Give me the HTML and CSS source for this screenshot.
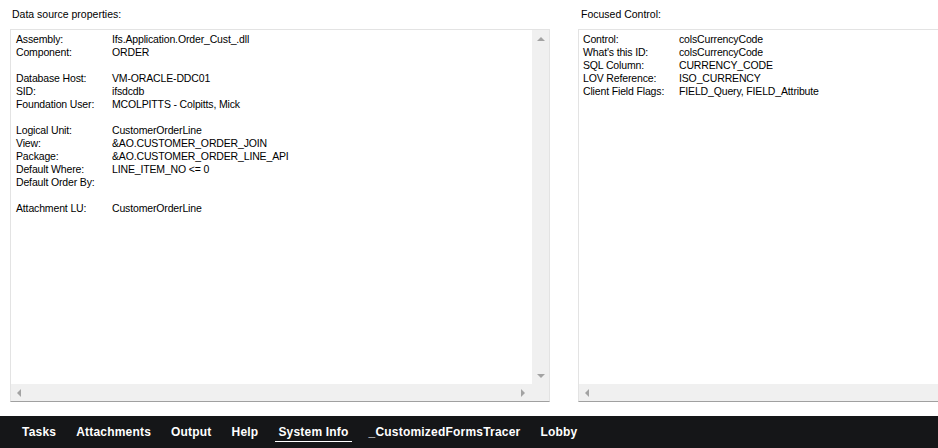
FILE: index.html
```html
<!DOCTYPE html>
<html>
<head>
<meta charset="utf-8">
<link rel="stylesheet" href="styles.css">
</head>
<body>
<div class="page">
  <main class="panels">
    <section class="panel panel-left">
      <div class="panel-title">Data source properties:</div>
      <div class="box">
        <div class="box-main">
          <div class="content">
            <div class="grid">
              <span>Assembly:</span><span>Ifs.Application.Order_Cust_.dll</span>
              <span>Component:</span><span>ORDER</span>
              <span class="blank"></span><span class="blank"></span>
              <span>Database Host:</span><span>VM-ORACLE-DDC01</span>
              <span>SID:</span><span>ifsdcdb</span>
              <span>Foundation User:</span><span>MCOLPITTS - Colpitts, Mick</span>
              <span class="blank"></span><span class="blank"></span>
              <span>Logical Unit:</span><span>CustomerOrderLine</span>
              <span>View:</span><span>&amp;AO.CUSTOMER_ORDER_JOIN</span>
              <span>Package:</span><span>&amp;AO.CUSTOMER_ORDER_LINE_API</span>
              <span>Default Where:</span><span>LINE_ITEM_NO &lt;= 0</span>
              <span>Default Order By:</span><span></span>
              <span class="blank"></span><span class="blank"></span>
              <span>Attachment LU:</span><span>CustomerOrderLine</span>
            </div>
          </div>
          <div class="vscroll">
            <span class="arrow up"></span>
            <span class="arrow down"></span>
          </div>
        </div>
        <div class="hscroll">
          <span class="arrow left"></span>
          <span class="arrow right"></span>
        </div>
      </div>
    </section>
    <section class="panel panel-right">
      <div class="panel-title">Focused Control:</div>
      <div class="box">
        <div class="box-main">
          <div class="content">
            <div class="grid">
              <span>Control:</span><span>colsCurrencyCode</span>
              <span>What's this ID:</span><span>colsCurrencyCode</span>
              <span>SQL Column:</span><span>CURRENCY_CODE</span>
              <span>LOV Reference:</span><span>ISO_CURRENCY</span>
              <span>Client Field Flags:</span><span>FIELD_Query, FIELD_Attribute</span>
            </div>
          </div>
        </div>
        <div class="hscroll">
          <span class="arrow left"></span>
        </div>
      </div>
    </section>
  </main>
  <nav class="tabbar">
    <a class="tab">Tasks</a>
    <a class="tab">Attachments</a>
    <a class="tab">Output</a>
    <a class="tab">Help</a>
    <a class="tab active">System Info</a>
    <a class="tab">_CustomizedFormsTracer</a>
    <a class="tab">Lobby</a>
  </nav>
</div>
</body>
</html>
```
FILE: styles.css
```css
html, body {
  margin: 0;
  padding: 0;
  background: #ffffff;
  overflow: hidden;
}
.page {
  width: 938px;
  height: 448px;
  display: flex;
  flex-direction: column;
  overflow: hidden;
}
.panels {
  display: flex;
  gap: 28px;
  padding: 7px 0 0 10px;
  height: 409px;
  box-sizing: border-box;
}
.panel {
  display: flex;
  flex-direction: column;
  flex-shrink: 0;
}
.panel-left { width: 540px; }
.panel-right { width: 400px; }
.panel-title {
  font-family: "Liberation Sans", Arial, sans-serif;
  font-size: 10.5px;
  line-height: 14px;
  color: #000;
  padding-left: 2px;
  height: 22px;
}
.panel-right .panel-title { padding-left: 3px; }
.box {
  height: 371px;
  border: 1px solid #e3e3e3;
  border-bottom-color: #a0a0a0;
  display: flex;
  flex-direction: column;
  background: #fff;
}
.box-main {
  flex: 1;
  display: flex;
  min-height: 0;
}
.content {
  flex: 1;
  padding: 3px 0 0 5px;
}
.panel-right .content { padding-left: 4px; }
.grid {
  display: grid;
  grid-template-columns: 96px auto;
  font-family: "Liberation Sans", Arial, sans-serif;
  font-size: 10.5px;
  letter-spacing: -0.15px;
  line-height: 13px;
  color: #000;
}
.grid span { white-space: nowrap; height: 13px; }
.vscroll {
  width: 17px;
  background: #f0f0f0;
  display: flex;
  flex-direction: column;
  justify-content: space-between;
  align-items: center;
  padding: 7px 0 6px;
}
.hscroll {
  height: 17px;
  background: #f0f0f0;
  display: flex;
  justify-content: space-between;
  align-items: center;
  padding: 0 24px 0 6px;
}
.arrow {
  width: 0;
  height: 0;
  display: block;
}
.arrow.up {
  border-left: 4px solid transparent;
  border-right: 4px solid transparent;
  border-bottom: 4px solid #a3a3a3;
}
.arrow.down {
  border-left: 4px solid transparent;
  border-right: 4px solid transparent;
  border-top: 4px solid #a3a3a3;
}
.arrow.left {
  border-top: 4px solid transparent;
  border-bottom: 4px solid transparent;
  border-right: 4px solid #a3a3a3;
}
.arrow.right {
  border-top: 4px solid transparent;
  border-bottom: 4px solid transparent;
  border-left: 4px solid #a3a3a3;
}
.tabbar {
  margin-top: 7px;
  height: 32px;
  background: #151618;
  display: flex;
  align-items: center;
  padding-left: 12px;
}
.tab {
  font-family: "Liberation Sans", Arial, sans-serif;
  font-weight: bold;
  font-size: 12px;
  letter-spacing: 0.2px;
  color: #ffffff;
  padding: 0 10px;
  line-height: 14px;
  position: relative;
}
.tab.active::after {
  content: "";
  position: absolute;
  left: 7px;
  right: 7px;
  bottom: -3px;
  height: 1px;
  background: #ffffff;
}
```
